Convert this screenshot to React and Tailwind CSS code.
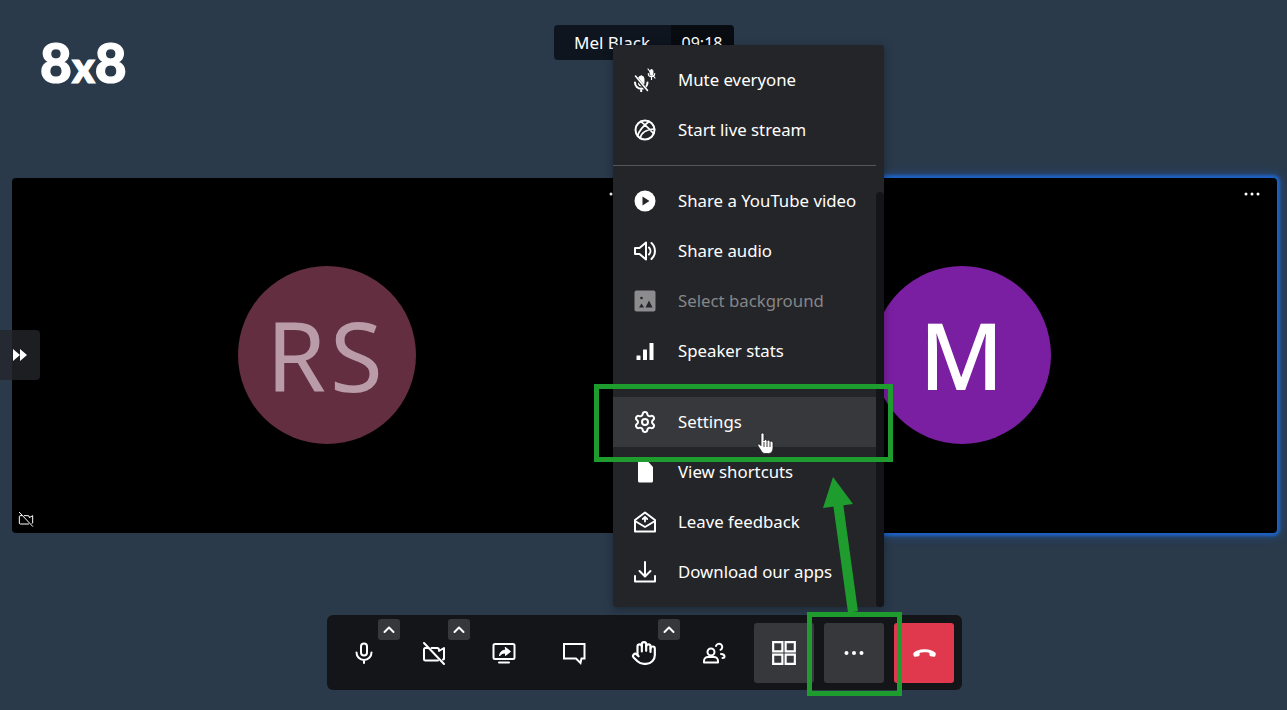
import React from 'react';
import { Hand, Settings } from 'lucide-react';

const Icon = ({ size = 24, children, className = '' }) => (
  <svg width={size} height={size} viewBox="0 0 24 24" fill="none" stroke="currentColor" strokeWidth="2" strokeLinecap="round" strokeLinejoin="round" className={className}>
    {children}
  </svg>
);

const MicIcon = () => (
  <Icon>
    <rect x="9" y="2.500" width="6" height="12" rx="3" />
    <path d="M4.500 11.500a7.500 7.500 0 0 0 15 0M12 19v3" />
  </Icon>
);

const VideoOffIcon = ({ size = 24, sw = 2 }) => (
  <svg width={size} height={size} viewBox="0 0 24 24" fill="none" stroke="currentColor" strokeWidth={sw} strokeLinejoin="round" strokeLinecap="round">
    <path d="M6 7H3a1.500 1.500 0 0 0-1 1.500v9.500A1.500 1.500 0 0 0 3.500 19.500H16M9.500 7H15a2 2 0 0 1 2 2v1l5-3v11l-1 .5" />
    <path d="M2 2l20 21" />
  </svg>
);

const ShareIcon = () => (
  <Icon>
    <rect x="1.500" y="3" width="21" height="15" rx="1.500" />
    <path d="M7 21.500h10" />
    <path d="M13.500 6.500l5 4-5 4v-2.500c-2.500 0-4.500.7-6 3 .3-3.500 2.300-5.800 6-6z" fill="currentColor" strokeWidth="1" />
  </Icon>
);

const ChatIcon = () => (
  <Icon>
    <path d="M2 3h20.500v14.500h-3l-1 4.500-4.500-4.500H2z" strokeLinecap="square" strokeLinejoin="miter" />
  </Icon>
);

const UsersIcon = () => (
  <Icon>
    <circle cx="9" cy="11" r="3.500" />
    <path d="M2 21.500v-1.500c0-2.500 2-4 4-4h6c2 0 4 1.500 4 4v1.500z" />
    <path d="M14 5a3.200 3.200 0 1 1 4.500 3.800M19 13c2 0 3.500 1 3.500 2.500 0 1-1 1.500-2 1.500" />
  </Icon>
);

const GridIcon = () => (
  <Icon size={26}>
    <path d="M2 2h8.500v8.500H2zM13.500 2H22v8.500h-8.500zM2 13.500h8.500V22H2zM13.500 13.500H22V22h-8.500z" strokeLinejoin="miter" />
  </Icon>
);

const DotsIcon = () => (
  <svg width="24" height="24" viewBox="0 0 24 24" fill="currentColor">
    <circle cx="4.500" cy="12" r="2" />
    <circle cx="12" cy="12" r="2" />
    <circle cx="19.500" cy="12" r="2" />
  </svg>
);

const HangupIcon = () => (
  <svg width="26" height="26" viewBox="0 0 24 24" fill="currentColor">
    <path d="M12 8.500c-4 0-7.500 1.200-9.300 3-.6.600-.7 1.300-.5 2.100l.4 1.100c.2.600.8.900 1.400.8l3-.6c.6-.1 1-.6 1-1.200v-1.800c1.400-.4 3.400-.6 4.500-.6s3.100.2 4.500.6v1.800c0 .6.400 1.100 1 1.200l3 .6c.6.100 1.200-.2 1.400-.8l.4-1.100c.2-.8.100-1.500-.5-2.100-1.800-1.800-5.300-3-9.300-3z" />
  </svg>
);

const MuteAllIcon = () => (
  <svg width="24" height="24" viewBox="0 0 24 24" fill="none" stroke="currentColor" strokeLinecap="round">
    <rect x="5.500" y="8" width="5.500" height="10" rx="2.700" fill="currentColor" strokeWidth="1" />
    <path d="M2 14.500a6.200 6.200 0 0 0 12.500 0M8.200 20.500v3" strokeWidth="2" />
    <path d="M1.500 8l14 16" strokeWidth="3" stroke="#242528" />
    <path d="M2.500 8l12 14.500" strokeWidth="1.600" />
    <rect x="17" y="1.500" width="3" height="6" rx="1.500" fill="currentColor" strokeWidth=".8" />
    <path d="M15.300 5.500a3.200 3.200 0 0 0 6.400 0M18.500 9.500v2M15 1l7 9" strokeWidth="1.200" />
  </svg>
);

const GlobeIcon = () => (
  <Icon>
    <circle cx="12" cy="12" r="9.500" />
    <path d="M7.500 3.500c5 3 9 8 13 12M16 3.500C10 8 6 13 4.500 18M7 20.500c1-5 6-9 14.500-9.500" strokeWidth="1.700" />
  </Icon>
);

const PlayIcon = () => (
  <svg width="24" height="24" viewBox="0 0 24 24">
    <circle cx="12" cy="12" r="10.500" fill="currentColor" />
    <path d="M9.500 7.500l7 4.500-7 4.500z" fill="#242528" />
  </svg>
);

const AudioIcon = () => (
  <Icon>
    <path d="M2 9h4.500L13 3.500v17L6.500 15H2z" />
    <path d="M16 8.500a5 5 0 0 1 0 7M18.500 4a11 11 0 0 1 0 16" />
  </Icon>
);

const BackgroundIcon = () => (
  <svg width="24" height="24" viewBox="0 0 24 24">
    <rect x="1.500" y="1.500" width="21" height="21" rx="2" fill="#8c8c8e" />
    <circle cx="8.500" cy="9" r="1.300" fill="#242528" />
    <path d="M12.500 18.500l3.500-7 3.500 7zM6 18.500l2.500-4 2.500 4z" fill="#242528" />
  </svg>
);

const StatsIcon = () => (
  <svg width="24" height="24" viewBox="0 0 24 24" fill="currentColor">
    <rect x="3.500" y="16.500" width="4" height="4.500" rx=".5" />
    <rect x="10" y="10.500" width="4" height="10.500" rx=".5" />
    <rect x="16.500" y="4" width="4" height="17" rx=".5" />
  </svg>
);

const FileIcon = () => (
  <svg width="24" height="24" viewBox="0 0 24 24" fill="currentColor">
    <path d="M5 1.500h10l5 5.500v14a1.500 1.500 0 0 1-1.500 1.500h-12A1.500 1.500 0 0 1 5 21z" />
  </svg>
);

const FeedbackIcon = () => (
  <Icon>
    <path d="M2 10l10-7.500L22 10v11.500H2z" />
    <path d="M2 11l10 6 10-6" />
    <path d="M12 11.500V7M9.800 9L12 6.800 14.200 9" strokeWidth="1.800" />
  </Icon>
);

const DownloadIcon = () => (
  <Icon>
    <path d="M12 2v14M6.500 11l5.500 5.500 5.500-5.500M2 16v5.500h20V16" />
  </Icon>
);

const Caret = () => (
  <div className="absolute top-[-4px] left-[44px] flex h-[21px] w-[22px] items-center justify-center rounded-[3px] bg-[#36383c] text-white">
    <svg width="12" height="8" viewBox="0 0 12 8" fill="none" stroke="currentColor" strokeWidth="2" strokeLinecap="round" strokeLinejoin="round">
      <path d="M1.500 6L6 1.500 10.500 6" />
    </svg>
  </div>
);

const ToolButton = ({ children, caret, active, danger }) => (
  <div
    className={`relative flex h-[60px] w-[60px] items-center justify-center rounded-[3px] text-white ${active ? 'bg-[#36383c]' : ''} ${danger ? 'bg-[#e0394d]' : ''}`}
  >
    {children}
    {caret && <Caret />}
  </div>
);

const MenuItem = ({ icon, label, disabled, hover }) => (
  <div
    className={`flex h-[50px] items-center gap-[21px] pl-5 text-[16.800px] ${disabled ? 'text-[#858688]' : 'text-white'} ${hover ? 'bg-[#37383c]' : ''}`}
  >
    <span className="flex h-6 w-6 items-center justify-center">{icon}</span>
    <span>{label}</span>
  </div>
);

const Divider = () => <div className="my-[10px] h-px bg-[#55565a]" />;

const Menu = () => (
  <div className="absolute top-[45px] left-[613px] w-[271px] rounded-[3px] bg-[#242528] py-[10px] pr-[8px] shadow-[0_2px_8px_rgba(0,0,0,0.35)]">
    <MenuItem icon={<MuteAllIcon />} label="Mute everyone" />
    <MenuItem icon={<GlobeIcon />} label="Start live stream" />
    <Divider />
    <MenuItem icon={<PlayIcon />} label="Share a YouTube video" />
    <MenuItem icon={<AudioIcon />} label="Share audio" />
    <MenuItem icon={<BackgroundIcon />} label="Select background" disabled />
    <MenuItem icon={<StatsIcon />} label="Speaker stats" />
    <Divider />
    <MenuItem icon={<Settings size={24} strokeWidth={2} />} label="Settings" hover />
    <MenuItem icon={<FileIcon />} label="View shortcuts" />
    <MenuItem icon={<FeedbackIcon />} label="Leave feedback" />
    <MenuItem icon={<DownloadIcon />} label="Download our apps" />
    {/* scrollbar */}
    <div className="absolute top-[147px] right-0 bottom-0 w-2 rounded-[4px] bg-[#141518]" />
  </div>
);

const Tile = ({ initials, avatarClass, textClass, glow }) => (
  <div className={`relative flex flex-1 items-center justify-center rounded-[4px] bg-black ${glow ? 'shadow-[0_0_3px_3px_#1f62c4,0_0_10px_4px_rgba(31,98,196,0.4)]' : ''}`}>
    <div className={`mr-px mb-px flex h-[178px] w-[178px] items-center justify-center rounded-full ${avatarClass}`}>
      <span className={textClass}>{initials}</span>
    </div>
    <div className="absolute top-[4px] right-[13px] text-white">
      <svg width="24" height="24" viewBox="0 0 24 24" fill="currentColor">
        <circle cx="6" cy="12" r="1.500" />
        <circle cx="12" cy="12" r="1.500" />
        <circle cx="18" cy="12" r="1.500" />
      </svg>
    </div>
  </div>
);

// green marks drawn on top of the screenshot
const Annotations = () => (
  <>
    <div className="absolute top-[384px] left-[594px] h-[78px] w-[299px] border-[5px] border-[#1e9c2e]" />
    <div className="absolute top-[612px] left-[807px] h-[84px] w-[95px] border-[5px] border-[#1e9c2e]" />
    <svg className="absolute top-0 left-0" width="1287" height="710" fill="none">
      <path d="M853 612L838 503" stroke="#1e9c2e" strokeWidth="10" />
      <path d="M833 477L823 508L853 504z" fill="#1e9c2e" />
    </svg>
    <svg className="absolute top-[432px] left-[757px]" width="17" height="22" viewBox="0 0 17 22">
      <path
        d="M4 2.500a1.500 1.500 0 0 1 3 0V9a1.500 1.500 0 0 1 3 0v.5a1.500 1.500 0 0 1 3 .3v.7a1.500 1.500 0 0 1 3 .5V16c0 3-1.500 5.500-4.500 5.500H8c-2 0-3-1.500-4-3L1 14c-.8-1.500 1-2.800 2-1.500l1 1.200z"
        fill="#fff"
        stroke="#222"
        strokeWidth=".8"
      />
      <path d="M7 10v5M10 10v5M13 11v4" stroke="#222" strokeWidth=".9" />
    </svg>
  </>
);

export default function App() {
  return (
    <div className="relative flex h-[710px] w-full flex-col overflow-hidden bg-[#2a3a4b] font-['Noto_Sans',sans-serif]">
      <header className="flex h-[178px]">
        <div className="flex-1">
          <span className="mt-[27px] ml-[40px] inline-block font-['Lato',sans-serif] text-[55px] leading-[70px] font-black text-white [-webkit-text-stroke:1.200px_white]">
            8<span className="text-[43px]">x</span>8
          </span>
        </div>
        <div className="mt-[25px] flex h-[35px] w-[180px] overflow-hidden rounded-[4px] text-white">
          <div className="flex flex-1 items-center justify-center bg-[#0e151f] text-[17px]">Mel Black</div>
          <div className="flex w-[63px] items-center justify-center bg-[#080b10] text-[16px]">09:18</div>
        </div>
        <div className="flex-1" />
      </header>

      <main className="flex h-[355px] gap-[5px] pr-[10px] pl-[12px]">
        <Tile initials="RS" avatarClass="bg-[#632e40]" textClass="text-[96px] tracking-[4px] text-[#b99ca8]" />
        <Tile initials="M" avatarClass="bg-[#7b1fa2]" textClass="text-[92px] font-medium text-white" glow />
      </main>

      <div className="mt-[82px] ml-px flex justify-center">
        <div className="flex h-[75px] gap-[10px] rounded-[6px] bg-[#141519] pt-[8px] pr-[8px] pl-[7px]">
          <ToolButton caret><MicIcon /></ToolButton>
          <ToolButton caret><VideoOffIcon /></ToolButton>
          <ToolButton><ShareIcon /></ToolButton>
          <ToolButton><ChatIcon /></ToolButton>
          <ToolButton caret><Hand size={26} strokeWidth={2} /></ToolButton>
          <ToolButton><UsersIcon /></ToolButton>
          <ToolButton active><GridIcon /></ToolButton>
          <ToolButton active><DotsIcon /></ToolButton>
          <ToolButton danger><HangupIcon /></ToolButton>
        </div>
      </div>

      {/* filmstrip toggle */}
      <div className="absolute top-[330px] left-0 flex h-[50px] w-[40px] items-center justify-end rounded-r-[4px] bg-[#24252a]/80 pr-[13px] text-white">
        <svg width="14" height="12" viewBox="0 0 14 12" fill="currentColor">
          <path d="M0 0l7 6-7 6zM7 0l7 6-7 6z" />
        </svg>
      </div>

      <div className="absolute top-[511px] left-[18px] text-white">
        <VideoOffIcon size={16} sw={1.500} />
      </div>

      <Menu />
      <Annotations />
    </div>
  );
}
